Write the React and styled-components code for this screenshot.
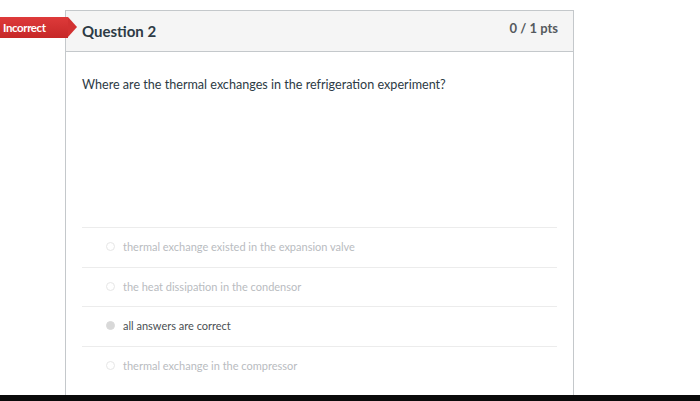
import React from "react";
import styled, { createGlobalStyle } from "styled-components";

const Global = createGlobalStyle`
  html, body { margin: 0; padding: 0; background: #fff; }
  body { font-family: Lato, "Open Sans", sans-serif; }
  * { box-sizing: border-box; }
`;

const Page = styled.div`
  width: 700px;
  height: 401px;
  display: flex;
  flex-direction: column;
  overflow: hidden;
  background: #fff;
`;

const Stage = styled.div`
  flex: 1;
  display: flex;
  padding: 10px 0 0 65px;
  min-height: 0;
`;

const Card = styled.section`
  position: relative;
  width: 509px;
  display: flex;
  flex-direction: column;
  border: 1px solid #c4c8cb;
  border-bottom: none;
  background: #fff;
`;

const Badge = styled.div`
  position: absolute;
  left: -66px;
  top: 6px;
  height: 21px;
  width: 68px;
  background: linear-gradient(#de3a3a, #c62828);
  color: #fff;
  font-weight: 700;
  font-size: 11.5px;
  letter-spacing: -0.4px;
  display: flex;
  align-items: center;
  padding-left: 3px;
  &::after {
    content: "";
    position: absolute;
    right: -9px;
    top: 0;
    border-top: 10.5px solid transparent;
    border-bottom: 10.5px solid transparent;
    border-left: 9px solid #d23131;
  }
`;

const Header = styled.header`
  height: 41px;
  flex: none;
  display: flex;
  align-items: center;
  justify-content: space-between;
  padding: 0 15px 0 16px;
  background: #f5f5f5;
  border-bottom: 1px solid #c4c8cb;
`;

const Title = styled.h2`
  margin: 0;
  font-size: 15px;
  font-weight: 700;
  color: #2d3b45;
`;

const Points = styled.span`
  font-size: 13px;
  font-weight: 700;
  color: #555a5e;
  margin-top: -7px;
`;

const Body = styled.div`
  padding: 25px 16px 0 16px;
  display: flex;
  flex-direction: column;
`;

const Prompt = styled.p`
  margin: 0;
  height: 150px;
  font-size: 12.6px;
  color: #2d3b45;
`;

const Answers = styled.ul`
  list-style: none;
  margin: 0;
  padding: 0;
`;

const Answer = styled.li`
  height: 39.7px;
  display: flex;
  align-items: center;
  gap: 8px;
  padding-left: 24px;
  padding-bottom: 2px;
  border-top: 1px solid #ececec;
  font-size: 11px;
  color: ${(p) => (p.$selected ? "#4a4f53" : "#b9bcbf")};
`;

const Radio = styled.span`
  width: 9px;
  height: 9px;
  border-radius: 50%;
  flex: none;
  border: 1px solid ${(p) => (p.$selected ? "#dadada" : "#e6e6e6")};
  background: ${(p) => (p.$selected ? "#d8d8d8" : "#fff")};
`;

const BottomBar = styled.div`
  height: 6px;
  flex: none;
  background: #0a0a0a;
`;

const answers = [
  { text: "thermal exchange existed in the expansion valve" },
  { text: "the heat dissipation in the condensor" },
  { text: "all answers are correct", selected: true },
  { text: "thermal exchange in the compressor" },
];

export default function App() {
  return (
    <Page>
      <Global />
      <Stage>
        <Card>
          <Badge>Incorrect</Badge>
          <Header>
            <Title>Question 2</Title>
            <Points>0 / 1 pts</Points>
          </Header>
          <Body>
            <Prompt>Where are the thermal exchanges in the refrigeration experiment?</Prompt>
            <Answers>
              {answers.map((a) => (
                <Answer key={a.text} $selected={a.selected}>
                  <Radio $selected={a.selected} />
                  {a.text}
                </Answer>
              ))}
            </Answers>
          </Body>
        </Card>
      </Stage>
      <BottomBar />
    </Page>
  );
}
